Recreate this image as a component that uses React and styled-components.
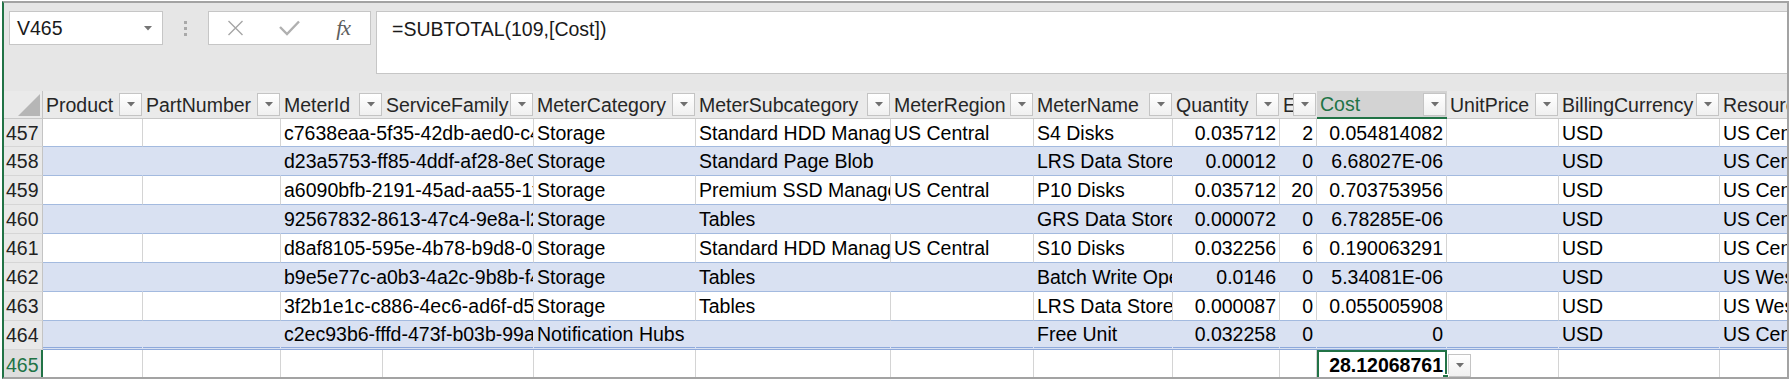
import React from "react";
import styled, { createGlobalStyle } from "styled-components";

const GlobalStyle = createGlobalStyle`
  html, body {
    margin: 0;
    padding: 0;
    background: #ffffff;
  }
  body {
    font-family: "Liberation Sans", Arial, sans-serif;
    font-size: 19.5px;
    line-height: 22px;
    color: #000;
  }
`;

const EXCEL_GREEN = "#217346";

const COLUMNS = [
    { key: "product", label: "Product", width: 100 },
    { key: "partNumber", label: "PartNumber", width: 138 },
    { key: "meterId", label: "MeterId", width: 102, overflow: true },
    { key: "serviceFamily", label: "ServiceFamily", width: 151 },
    { key: "meterCategory", label: "MeterCategory", width: 162 },
    { key: "meterSubcategory", label: "MeterSubcategory", width: 195 },
    { key: "meterRegion", label: "MeterRegion", width: 143 },
    { key: "meterName", label: "MeterName", width: 139 },
    { key: "quantity", label: "Quantity", width: 107, numeric: true },
    { key: "effectivePrice", label: "EffectivePrice", width: 37, numeric: true },
    { key: "cost", label: "Cost", width: 130, numeric: true },
    { key: "unitPrice", label: "UnitPrice", width: 112, numeric: true },
    { key: "billingCurrency", label: "BillingCurrency", width: 161 },
    { key: "resourceLocation", label: "ResourceLocation", width: 150 },
];

const TEMPLATE = `39px ${COLUMNS.map((c) => `${c.width}px`).join(" ")}`;

const ROWS = [
    {
        num: 457,
        meterId: "c7638eaa-5f35-42db-aed0-c41b",
        meterCategory: "Storage",
        meterSubcategory: "Standard HDD Managed Disks",
        meterRegion: "US Central",
        meterName: "S4 Disks",
        quantity: "0.035712",
        effectivePrice: "2",
        cost: "0.054814082",
        billingCurrency: "USD",
        resourceLocation: "US Central",
    },
    {
        num: 458,
        meterId: "d23a5753-ff85-4ddf-af28-8e0c",
        meterCategory: "Storage",
        meterSubcategory: "Standard Page Blob",
        meterName: "LRS Data Stored",
        quantity: "0.00012",
        effectivePrice: "0",
        cost: "6.68027E-06",
        billingCurrency: "USD",
        resourceLocation: "US Central",
    },
    {
        num: 459,
        meterId: "a6090bfb-2191-45ad-aa55-1f3c",
        meterCategory: "Storage",
        meterSubcategory: "Premium SSD Managed Disks",
        meterRegion: "US Central",
        meterName: "P10 Disks",
        quantity: "0.035712",
        effectivePrice: "20",
        cost: "0.703753956",
        billingCurrency: "USD",
        resourceLocation: "US Central",
    },
    {
        num: 460,
        meterId: "92567832-8613-47c4-9e8a-l2d6",
        meterCategory: "Storage",
        meterSubcategory: "Tables",
        meterName: "GRS Data Stored",
        quantity: "0.000072",
        effectivePrice: "0",
        cost: "6.78285E-06",
        billingCurrency: "USD",
        resourceLocation: "US Central",
    },
    {
        num: 461,
        meterId: "d8af8105-595e-4b78-b9d8-0a7e",
        meterCategory: "Storage",
        meterSubcategory: "Standard HDD Managed Disks",
        meterRegion: "US Central",
        meterName: "S10 Disks",
        quantity: "0.032256",
        effectivePrice: "6",
        cost: "0.190063291",
        billingCurrency: "USD",
        resourceLocation: "US Central",
    },
    {
        num: 462,
        meterId: "b9e5e77c-a0b3-4a2c-9b8b-f41d",
        meterCategory: "Storage",
        meterSubcategory: "Tables",
        meterName: "Batch Write Operations",
        quantity: "0.0146",
        effectivePrice: "0",
        cost: "5.34081E-06",
        billingCurrency: "USD",
        resourceLocation: "US West",
    },
    {
        num: 463,
        meterId: "3f2b1e1c-c886-4ec6-ad6f-d5e0",
        meterCategory: "Storage",
        meterSubcategory: "Tables",
        meterName: "LRS Data Stored",
        quantity: "0.000087",
        effectivePrice: "0",
        cost: "0.055005908",
        billingCurrency: "USD",
        resourceLocation: "US West",
    },
    {
        num: 464,
        meterId: "c2ec93b6-fffd-473f-b03b-99a4",
        meterCategory: "Notification Hubs",
        meterName: "Free Unit",
        quantity: "0.032258",
        effectivePrice: "0",
        cost: "0",
        billingCurrency: "USD",
        resourceLocation: "US Central",
    },
];

/* ---------- frame + formula bar ---------- */

const Frame = styled.div`
    margin: 1px 1px 0 2px;
    height: 378px;
    box-sizing: border-box;
    border: 2px solid #a3a3a3;
    border-left-color: ${EXCEL_GREEN};
    overflow: hidden;
    background: #ffffff;
`;

const FormulaBar = styled.div`
    display: flex;
    align-items: flex-start;
    height: 88px;
    box-sizing: border-box;
    padding: 8px 0 0 5px;
    background: #e6e6e6;
`;

const NameBox = styled.div`
    width: 154px;
    height: 34px;
    box-sizing: border-box;
    flex-shrink: 0;
    display: flex;
    align-items: center;
    justify-content: space-between;
    padding: 0 10px 0 7px;
    border: 1px solid #c6c6c6;
    background: #ffffff;
    color: #1a1a1a;
`;

const Grip = styled.div`
    width: 45px;
    height: 34px;
    flex-shrink: 0;
    display: flex;
    flex-direction: column;
    align-items: center;
    justify-content: center;
    gap: 3px;
`;

const GripDot = styled.span`
    width: 3px;
    height: 3px;
    background: #a9a9a9;
`;

const ActionBox = styled.div`
    width: 163px;
    height: 34px;
    box-sizing: border-box;
    flex-shrink: 0;
    display: grid;
    grid-template-columns: repeat(3, 1fr);
    border: 1px solid #c6c6c6;
    background: #ffffff;
`;

const ActionSlot = styled.div`
    display: flex;
    align-items: center;
    justify-content: center;
`;

const FxLabel = styled.span`
    font-family: "Liberation Serif", "Times New Roman", serif;
    font-style: italic;
    font-size: 22px;
    color: #5e5e5e;
    letter-spacing: -1px;
`;

const FormulaInput = styled.div`
    flex: 1;
    height: 63px;
    margin-left: 5px;
    box-sizing: border-box;
    padding: 6px 0 0 15px;
    border: 1px solid #c6c6c6;
    border-right: none;
    background: #ffffff;
    color: #1a1a1a;
    white-space: nowrap;
`;

/* ---------- sheet ---------- */

const Sheet = styled.div`
    width: max-content;
`;

const GridRow = styled.div`
    display: grid;
    grid-template-columns: ${TEMPLATE};
    height: ${({ $height }) => $height}px;
`;

const HeaderRow = styled(GridRow)`
    background: #eaeaea;
`;

const Corner = styled.div`
    display: flex;
    align-items: flex-end;
    justify-content: flex-end;
    padding: 0 2px 2px 0;
    border-right: 1px solid #c4c4c4;
    border-bottom: 1px solid #c8c8c8;
`;

const SelectAll = styled.div`
    width: 22px;
    height: 22px;
    background: #b6b6b6;
    clip-path: polygon(100% 0, 100% 100%, 0 100%);
`;

const HeaderCell = styled.div`
    display: flex;
    align-items: center;
    min-width: 0;
    box-sizing: border-box;
    padding: 0 1px 0 3px;
    overflow: hidden;
    background: ${({ $selected }) => ($selected ? "#d3d3d3" : "transparent")};
    color: ${({ $selected }) => ($selected ? EXCEL_GREEN : "#262626")};
    border-bottom: ${({ $selected }) =>
        $selected ? `2px solid ${EXCEL_GREEN}` : "1px solid #c8c8c8"};
`;

const HeaderLabel = styled.span`
    flex: 1;
    min-width: 0;
    overflow: hidden;
    white-space: nowrap;
`;

const FilterButton = styled.div`
    flex-shrink: 0;
    width: 23px;
    height: 23px;
    box-sizing: border-box;
    display: flex;
    align-items: center;
    justify-content: center;
    border: 1px solid #c4c4c4;
    background: linear-gradient(#ffffff, #f0f0f0);
`;

const FloatingFilter = styled(FilterButton)`
    position: absolute;
    top: 2px;
    left: calc(100% + 3px);
`;

const RowNumber = styled.div`
    display: flex;
    align-items: center;
    padding-left: 2px;
    box-sizing: border-box;
    background: ${({ $active }) => ($active ? "#dedede" : "#e9e9e9")};
    color: ${({ $active }) => ($active ? EXCEL_GREEN : "#222")};
    border-bottom: 1px solid #d6d6d6;
    border-right: ${({ $active }) =>
        $active ? `2px solid ${EXCEL_GREEN}` : "1px solid #c4c4c4"};
`;

const Cell = styled.div`
    grid-column: span ${({ $span }) => $span};
    display: flex;
    align-items: center;
    justify-content: ${({ $numeric }) => ($numeric ? "flex-end" : "flex-start")};
    min-width: 0;
    box-sizing: border-box;
    padding: 0 3px;
    white-space: nowrap;
    overflow: hidden;
    background: ${({ $band }) => ($band ? "#d9e1f2" : "#ffffff")};
    border-right: 1px solid ${({ $band }) => ($band ? "transparent" : "#d4d4d4")};
    border-bottom: ${({ $edge }) =>
        $edge === "total"
            ? "3px double #8ea9db"
            : $edge === "none"
            ? "none"
            : "1px solid #a3badf"};
`;

const TotalCell = styled.div`
    position: relative;
    display: flex;
    align-items: center;
    justify-content: flex-end;
    box-sizing: border-box;
    padding: 0 2px;
    border: 2px solid ${EXCEL_GREEN};
    font-weight: bold;
    white-space: nowrap;
`;

const FillHandle = styled.span`
    position: absolute;
    right: -4px;
    top: 22px;
    width: 5px;
    height: 5px;
    background: ${EXCEL_GREEN};
    border: 1px solid #ffffff;
`;

/* ---------- icons ---------- */

const Caret = ({ color = "#6f6f6f" }) => (
    <svg width="8" height="5" viewBox="0 0 8 5">
        <polygon points="0,0 8,0 4,4.5" fill={color} />
    </svg>
);

const CancelIcon = () => (
    <svg width="17" height="16" viewBox="0 0 17 16">
        <path d="M1.5 1 L15.5 15 M15.5 1 L1.5 15" stroke="#a6a6a6" strokeWidth="1.4" fill="none" />
    </svg>
);

const EnterIcon = () => (
    <svg width="21" height="16" viewBox="0 0 21 16">
        <path d="M1 7 L8 14 L20 1.5" stroke="#b0b0b0" strokeWidth="2.4" fill="none" />
    </svg>
);

/* ---------- rows ---------- */

const renderCells = (row, band, edge) => {
    const cells = [];
    for (let i = 0; i < COLUMNS.length; i++) {
        const col = COLUMNS[i];
        const value = row[col.key] || "";
        let span = 1;
        // text spills into the empty cells to its right, like Excel does
        if (col.overflow && value) {
            while (i + span < COLUMNS.length && !row[COLUMNS[i + span].key]) span++;
        }
        cells.push(
            <Cell key={col.key} $span={span} $numeric={col.numeric} $band={band} $edge={edge}>
                {value}
            </Cell>
        );
        i += span - 1;
    }
    return cells;
};

const App = () => {
    return (
        <>
            <GlobalStyle />
            <Frame>
                <FormulaBar>
                    <NameBox>
                        <span>V465</span>
                        <Caret color="#757575" />
                    </NameBox>
                    <Grip>
                        <GripDot />
                        <GripDot />
                        <GripDot />
                    </Grip>
                    <ActionBox>
                        <ActionSlot>
                            <CancelIcon />
                        </ActionSlot>
                        <ActionSlot>
                            <EnterIcon />
                        </ActionSlot>
                        <ActionSlot>
                            <FxLabel>fx</FxLabel>
                        </ActionSlot>
                    </ActionBox>
                    <FormulaInput>=SUBTOTAL(109,[Cost])</FormulaInput>
                </FormulaBar>

                <Sheet>
                    <HeaderRow $height={28}>
                        <Corner>
                            <SelectAll />
                        </Corner>
                        {COLUMNS.map((col) => (
                            <HeaderCell key={col.key} $selected={col.key === "cost"}>
                                <HeaderLabel>{col.label}</HeaderLabel>
                                <FilterButton>
                                    <Caret />
                                </FilterButton>
                            </HeaderCell>
                        ))}
                    </HeaderRow>

                    {ROWS.map((row, idx) => {
                        const band = row.num % 2 === 0;
                        const last = idx === ROWS.length - 1;
                        return (
                            <GridRow key={row.num} $height={idx === 0 ? 28 : 29}>
                                <RowNumber>{row.num}</RowNumber>
                                {renderCells(row, band, last ? "total" : "line")}
                            </GridRow>
                        );
                    })}

                    <GridRow $height={30}>
                        <RowNumber $active>465</RowNumber>
                        {COLUMNS.map((col) =>
                            col.key === "cost" ? (
                                <TotalCell key={col.key}>
                                    28.12068761
                                    <FloatingFilter>
                                        <Caret />
                                    </FloatingFilter>
                                    <FillHandle />
                                </TotalCell>
                            ) : (
                                <Cell key={col.key} $span={1} $edge="none" />
                            )
                        )}
                    </GridRow>
                </Sheet>
            </Frame>
        </>
    );
};

export default App;
